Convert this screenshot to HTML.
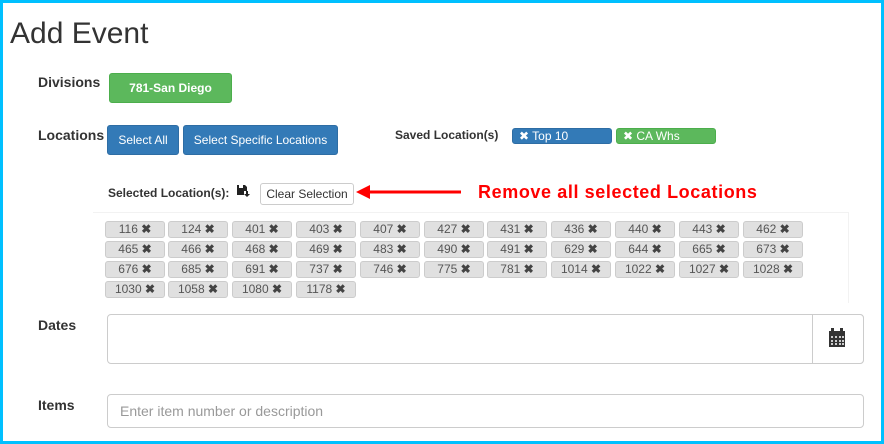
<!DOCTYPE html>
<html><head><meta charset="utf-8"><style>
*{box-sizing:border-box;margin:0;padding:0}
body{width:884px;height:444px;overflow:hidden;background:#fff;font-family:"Liberation Sans",Arial,sans-serif;color:#333;position:relative}
.frame{position:absolute;left:0;top:0;width:884px;height:444px;border:3px solid #00c0ff;border-left-width:3px}
.a{position:absolute}
h1{position:absolute;left:10px;top:17px;font-size:30px;font-weight:normal;color:#333}
.lbl{position:absolute;font-weight:bold;font-size:14px;color:#333}
.btn{position:absolute;color:#fff;font-size:12px;text-align:center;border-radius:3px}
.blue{background:#337ab7;border:1px solid #2e6da4}
.green{background:#5cb85c;border:1px solid #4cae4c}
.tag{position:absolute;width:60px;height:17px;background:#e0e0e0;border:1px solid #ccc;border-radius:3px;font-size:12px;line-height:15px;text-align:center;color:#555}
.tag b{color:#444;font-size:12px}
.panel{position:absolute;left:93px;top:212px;width:756px;height:91px;border:1px solid #f2f2f2;border-bottom:none;border-left:none}
</style></head><body>
<div class="frame"></div>
<h1>Add Event</h1>
<div class="lbl" style="left:38px;top:74px">Divisions</div>
<div class="btn green" style="left:109px;top:73px;width:123px;height:30px;line-height:28px;font-weight:bold">781-San Diego</div>
<div class="lbl" style="left:38px;top:127px">Locations</div>
<div class="btn blue" style="left:107px;top:125px;width:72px;height:30px;line-height:28px">Select All</div>
<div class="btn blue" style="left:183px;top:125px;width:155px;height:30px;line-height:28px">Select Specific Locations</div>
<div class="lbl" style="left:395px;top:128px;font-size:12px">Saved Location(s)</div>
<div class="btn blue" style="left:512px;top:128px;width:100px;height:16px;line-height:14px;text-align:left;padding-left:6px">✖ Top 10</div>
<div class="btn green" style="left:616px;top:128px;width:100px;height:16px;line-height:14px;text-align:left;padding-left:6px">✖ CA Whs</div>
<div class="lbl" style="left:108px;top:186px;font-size:12px">Selected Location(s):</div>
<svg class="a" style="left:237px;top:184px" width="14" height="14" viewBox="0 0 14 14"><path d="M0 1h8l2 2v4H7v4H0z" fill="#222"/><rect x="2" y="1" width="4" height="3" fill="#fff"/><path d="M9 7h2v3h2l-3 3-3-3h2z" fill="#222"/></svg>
<div class="a" style="left:260px;top:183px;width:94px;height:22px;border:1px solid #ccc;border-radius:3px;font-size:12px;line-height:20px;text-align:center;color:#333">Clear Selection</div>
<svg class="a" style="left:356px;top:184px" width="106" height="16"><line x1="10" y1="8" x2="105" y2="8" stroke="#f00" stroke-width="3"/><path d="M0 8L14 1v14z" fill="#f00"/></svg>
<div class="a" style="left:478px;top:182px;font-size:18px;letter-spacing:0.6px;font-weight:bold;color:#f00">Remove all selected Locations</div>
<div class="panel"></div>
<div class="lbl" style="left:38px;top:317px">Dates</div>
<div class="a" style="left:107px;top:314px;width:757px;height:50px;border:1px solid #ccc;border-radius:4px"></div>
<div class="a" style="left:812px;top:314px;width:52px;height:50px;border:1px solid #ccc;border-radius:0 4px 4px 0;background:#fff"></div>
<svg class="a" style="left:828px;top:328px" width="18" height="19" viewBox="0 0 18 19"><rect x="1" y="3" width="16" height="16" fill="#333"/><rect x="3" y="0" width="3" height="4" fill="#333"/><rect x="12" y="0" width="3" height="4" fill="#333"/><g fill="#ccc"><rect x="3" y="8" width="2" height="2"/><rect x="7" y="8" width="2" height="2"/><rect x="11" y="8" width="2" height="2"/><rect x="14" y="8" width="2" height="2"/><rect x="3" y="12" width="2" height="2"/><rect x="7" y="12" width="2" height="2"/><rect x="11" y="12" width="2" height="2"/><rect x="14" y="12" width="2" height="2"/><rect x="3" y="15" width="2" height="2"/><rect x="7" y="15" width="2" height="2"/><rect x="11" y="15" width="2" height="2"/><rect x="14" y="15" width="2" height="2"/></g></svg>
<div class="lbl" style="left:38px;top:397px">Items</div>
<div class="a" style="left:107px;top:394px;width:757px;height:34px;border:1px solid #ccc;border-radius:4px;font-size:14px;line-height:32px;padding-left:12px;color:#999">Enter item number or description</div>
<div class="tag" style="left:105px;top:221px">116 <b>✖</b></div>
<div class="tag" style="left:168px;top:221px">124 <b>✖</b></div>
<div class="tag" style="left:232px;top:221px">401 <b>✖</b></div>
<div class="tag" style="left:296px;top:221px">403 <b>✖</b></div>
<div class="tag" style="left:360px;top:221px">407 <b>✖</b></div>
<div class="tag" style="left:424px;top:221px">427 <b>✖</b></div>
<div class="tag" style="left:487px;top:221px">431 <b>✖</b></div>
<div class="tag" style="left:551px;top:221px">436 <b>✖</b></div>
<div class="tag" style="left:615px;top:221px">440 <b>✖</b></div>
<div class="tag" style="left:679px;top:221px">443 <b>✖</b></div>
<div class="tag" style="left:743px;top:221px">462 <b>✖</b></div>
<div class="tag" style="left:105px;top:241px">465 <b>✖</b></div>
<div class="tag" style="left:168px;top:241px">466 <b>✖</b></div>
<div class="tag" style="left:232px;top:241px">468 <b>✖</b></div>
<div class="tag" style="left:296px;top:241px">469 <b>✖</b></div>
<div class="tag" style="left:360px;top:241px">483 <b>✖</b></div>
<div class="tag" style="left:424px;top:241px">490 <b>✖</b></div>
<div class="tag" style="left:487px;top:241px">491 <b>✖</b></div>
<div class="tag" style="left:551px;top:241px">629 <b>✖</b></div>
<div class="tag" style="left:615px;top:241px">644 <b>✖</b></div>
<div class="tag" style="left:679px;top:241px">665 <b>✖</b></div>
<div class="tag" style="left:743px;top:241px">673 <b>✖</b></div>
<div class="tag" style="left:105px;top:261px">676 <b>✖</b></div>
<div class="tag" style="left:168px;top:261px">685 <b>✖</b></div>
<div class="tag" style="left:232px;top:261px">691 <b>✖</b></div>
<div class="tag" style="left:296px;top:261px">737 <b>✖</b></div>
<div class="tag" style="left:360px;top:261px">746 <b>✖</b></div>
<div class="tag" style="left:424px;top:261px">775 <b>✖</b></div>
<div class="tag" style="left:487px;top:261px">781 <b>✖</b></div>
<div class="tag" style="left:551px;top:261px">1014 <b>✖</b></div>
<div class="tag" style="left:615px;top:261px">1022 <b>✖</b></div>
<div class="tag" style="left:679px;top:261px">1027 <b>✖</b></div>
<div class="tag" style="left:743px;top:261px">1028 <b>✖</b></div>
<div class="tag" style="left:105px;top:281px">1030 <b>✖</b></div>
<div class="tag" style="left:168px;top:281px">1058 <b>✖</b></div>
<div class="tag" style="left:232px;top:281px">1080 <b>✖</b></div>
<div class="tag" style="left:296px;top:281px">1178 <b>✖</b></div>
</body></html>
